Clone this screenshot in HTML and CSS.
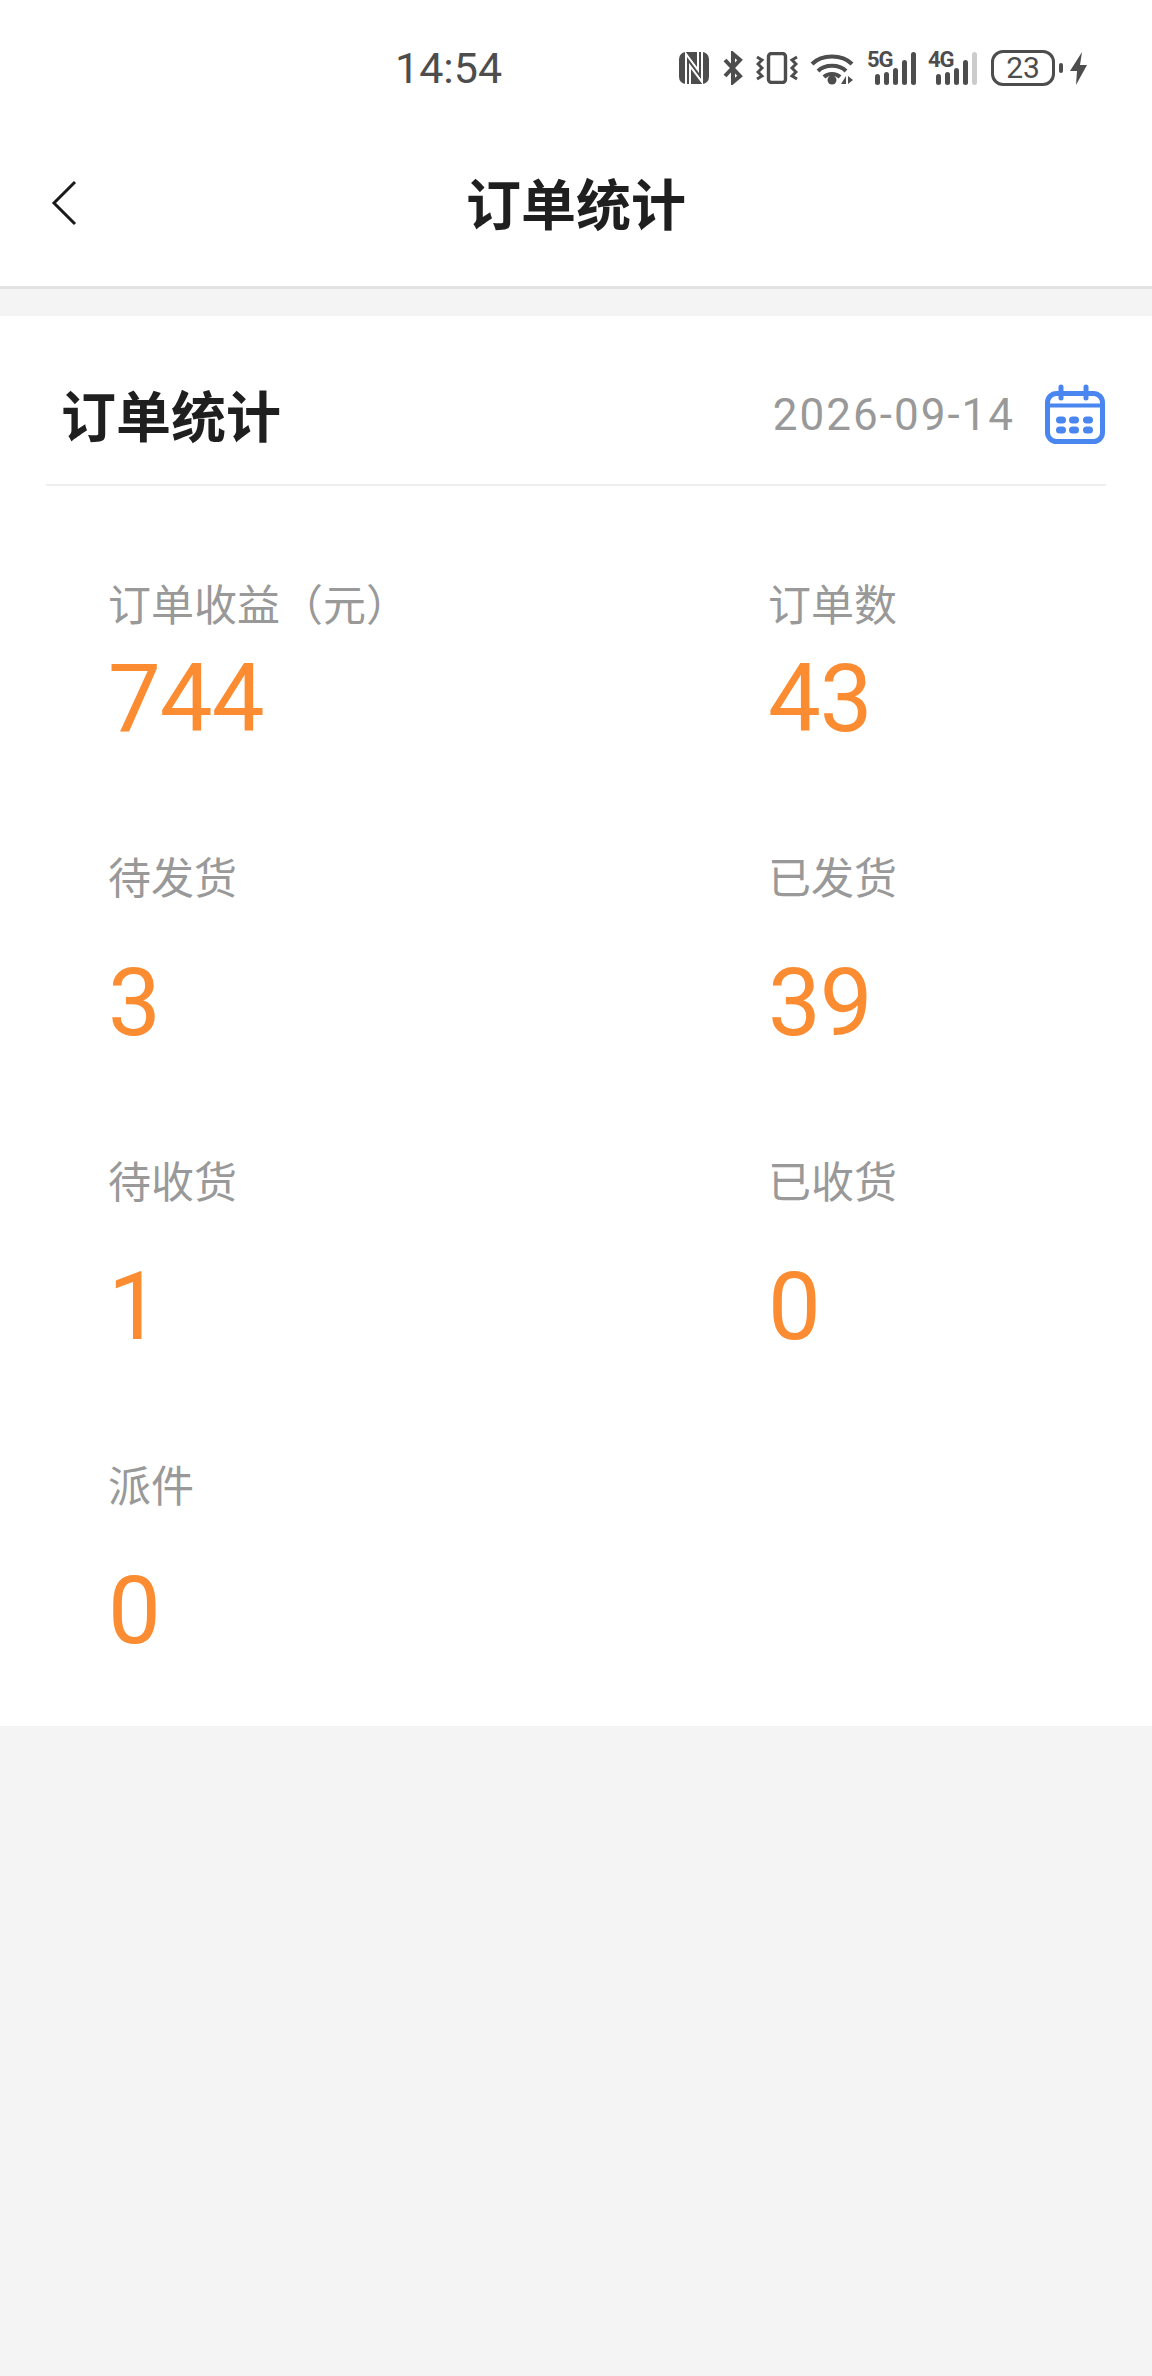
FILE: index.html
```html
<!DOCTYPE html>
<html>
<head>
    <title>订单统计</title>
    <meta charset="utf-8">
    <link rel="stylesheet" href="styles.css">
</head>
<body>
<div class="status-bar">
    <div class="time">14:54</div>
    <div class="status-icons">
        <svg class="ic-nfc" width="30" height="32" viewBox="0 0 30 32">
            <rect width="30" height="32" rx="7" fill="#4d4d4d"/>
            <path d="M9 34V8l12 16V-2" stroke="#fff" stroke-width="6" fill="none"/>
            <path d="M9 34V8l12 16V-2" stroke="#4d4d4d" stroke-width="2" fill="none"/>
        </svg>
        <svg class="ic-bt" width="20" height="34" viewBox="0 0 20 34">
            <path d="M2 9l15 16-7 6V3l7 6L2 25" stroke="#4d4d4d" stroke-width="4" fill="none"/>
        </svg>
        <svg class="ic-vib" width="42" height="32" viewBox="0 0 42 32">
            <rect x="12.5" y="1.5" width="17" height="29" rx="3" stroke="#4d4d4d" stroke-width="3.4" fill="none"/>
            <path d="M1 5l5 3-4 4 4 4-4 4 4 4-5 3M41 5l-5 3 4 4-4 4 4 4-4 4 5 3" stroke="#4d4d4d" stroke-width="3" fill="none"/>
        </svg>
        <svg class="ic-wifi" width="44" height="33" viewBox="0 0 44 33">
            <path d="M2 12C12 2 32 2 42 12M8 19c7-7 21-7 28 0M14 25c4-4 12-4 16 0" stroke="#4d4d4d" stroke-width="4" fill="none"/>
            <circle cx="22" cy="28" r="4.5" fill="#4d4d4d"/>
            <path d="M36 24v8h-5zM38 24v8l5-4z" fill="#4d4d4d"/>
        </svg>
        <div class="signal">
            <span class="net">5G</span>
            <i class="bar b1"></i><i class="bar b2"></i><i class="bar b3"></i><i class="bar b4"></i><i class="bar b5"></i>
        </div>
        <div class="signal">
            <span class="net">4G</span>
            <i class="bar b1"></i><i class="bar b2"></i><i class="bar b3"></i><i class="bar b4"></i><i class="bar b5 off"></i>
        </div>
        <div class="battery">23</div>
        <i class="battery-nub"></i>
        <svg class="ic-bolt" width="17" height="33" viewBox="0 0 17 33">
            <path d="M12 0L0 19h7L6 33 17 13h-7z" fill="#4d4d4d"/>
        </svg>
    </div>
</div>

<div class="nav">
    <svg class="back" width="26" height="46" viewBox="0 0 26 46">
        <path d="M24 2L3 23l21 21" stroke="#1a1a1a" stroke-width="3" fill="none"/>
    </svg>
    <h1>订单统计</h1>
</div>

<div class="card">
    <div class="card-head">
        <h2>订单统计</h2>
        <div class="date">2026-09-14</div>
        <svg class="calendar" width="62" height="60" viewBox="0 0 62 60">
            <rect x="3.5" y="9.5" width="55" height="48" rx="9" fill="none" stroke="#4a86f0" stroke-width="5"/>
            <path d="M3 21.5h56" stroke="#4a86f0" stroke-width="4"/>
            <path d="M17 3v11M42 3v11" stroke="#4a86f0" stroke-width="5" stroke-linecap="round"/>
            <rect x="12" y="32.5" width="10" height="7" rx="3.5" fill="#4a86f0"/>
            <rect x="25" y="32.5" width="10" height="7" rx="3.5" fill="#4a86f0"/>
            <rect x="39" y="32.5" width="10" height="7" rx="3.5" fill="#4a86f0"/>
            <rect x="12" y="42.5" width="10" height="7" rx="3.5" fill="#4a86f0"/>
            <rect x="25" y="42.5" width="10" height="7" rx="3.5" fill="#4a86f0"/>
            <rect x="39" y="42.5" width="10" height="7" rx="3.5" fill="#4a86f0"/>
        </svg>
    </div>
    <div class="stats">
        <div class="stat first"><div class="label">订单收益（元）</div><div class="value">744</div></div>
        <div class="stat first"><div class="label">订单数</div><div class="value">43</div></div>
        <div class="stat"><div class="label">待发货</div><div class="value">3</div></div>
        <div class="stat"><div class="label">已发货</div><div class="value">39</div></div>
        <div class="stat"><div class="label">待收货</div><div class="value">1</div></div>
        <div class="stat"><div class="label">已收货</div><div class="value">0</div></div>
        <div class="stat"><div class="label">派件</div><div class="value">0</div></div>
    </div>
</div>
</body>
</html>
```

FILE: styles.css
```css
html, body {
    margin: 0;
    background-color: #f4f4f4;
    font-family: "Noto Sans CJK SC", Roboto, sans-serif;
}

.status-bar {
    display: flex;
    align-items: center;
    height: 136px;
    padding-left: 395px;
    box-sizing: border-box;
    background-color: #fff;
}

.time {
    font-family: Roboto, sans-serif;
    font-size: 43px;
    color: #4d4d4d;
    width: 284px;
}

.status-icons {
    display: flex;
    align-items: center;
}

.ic-bt { margin-left: 14px; }
.ic-vib { margin-left: 13px; }
.ic-wifi { margin-left: 12px; }

.signal {
    position: relative;
    display: flex;
    align-items: flex-end;
    justify-content: flex-end;
    width: 49px;
    height: 34px;
    margin-left: 13px;
}

.signal + .signal { margin-left: 12px; }

.net {
    position: absolute;
    left: 0;
    top: -2px;
    font-family: Roboto, sans-serif;
    font-size: 22px;
    font-weight: 700;
    line-height: 22px;
    letter-spacing: -1px;
    color: #4d4d4d;
}

.bar {
    width: 5px;
    border-radius: 3px;
    background-color: #4d4d4d;
    margin-left: 4px;
}

.b1 { height: 11px; }
.b2 { height: 13px; }
.b3 { height: 17px; }
.b4 { height: 25px; }
.b5 { height: 33px; }
.off { background-color: #ccc; }

.battery {
    width: 64px;
    height: 36px;
    margin-left: 14px;
    box-sizing: border-box;
    border: 3px solid #4d4d4d;
    border-radius: 12px;
    font-family: Roboto, sans-serif;
    font-size: 30px;
    line-height: 30px;
    text-align: center;
    color: #4d4d4d;
}

.battery-nub {
    width: 4px;
    height: 10px;
    margin-left: 4px;
    border-radius: 2px;
    background-color: #4d4d4d;
}

.ic-bolt { margin-left: 7px; }

.nav {
    position: relative;
    height: 150px;
    background-color: #fff;
    border-bottom: 3px solid #e2e2e2;
    display: flex;
    align-items: center;
    justify-content: center;
}

.back {
    position: absolute;
    left: 51px;
    top: 44px;
}

h1 {
    margin: 0 0 20px;
    font-size: 55px;
    font-weight: 700;
    color: #1f1f1f;
}

.card {
    margin-top: 27px;
    height: 1410px;
    background-color: #fff;
}

.card-head {
    display: flex;
    align-items: center;
    height: 170px;
    margin: 0 46px;
    padding: 25px 0 0 15px;
    border-bottom: 2px solid #eee;
    box-sizing: border-box;
}

h2 {
    margin: 0;
    flex: 1;
    font-size: 55px;
    font-weight: 700;
    color: #1f1f1f;
}

.date {
    font-family: Roboto, sans-serif;
    font-size: 44px;
    color: #999;
    letter-spacing: 2px;
    margin: 4px 29px 0 0;
}

.calendar {
    margin-top: 2px;
}

.stats {
    display: grid;
    grid-template-columns: 660px 1fr;
    padding: 86px 0 0 108px;
}

.stat {
    height: 304px;
}

.stat.first {
    height: 273px;
}

.label {
    font-size: 43px;
    line-height: 60px;
    color: #999;
}

.value {
    font-family: Roboto, sans-serif;
    font-size: 94px;
    line-height: 92px;
    letter-spacing: -1px;
    color: #fb8c32;
    margin-top: 52px;
}

.first .value {
    margin-top: 21px;
}
```
